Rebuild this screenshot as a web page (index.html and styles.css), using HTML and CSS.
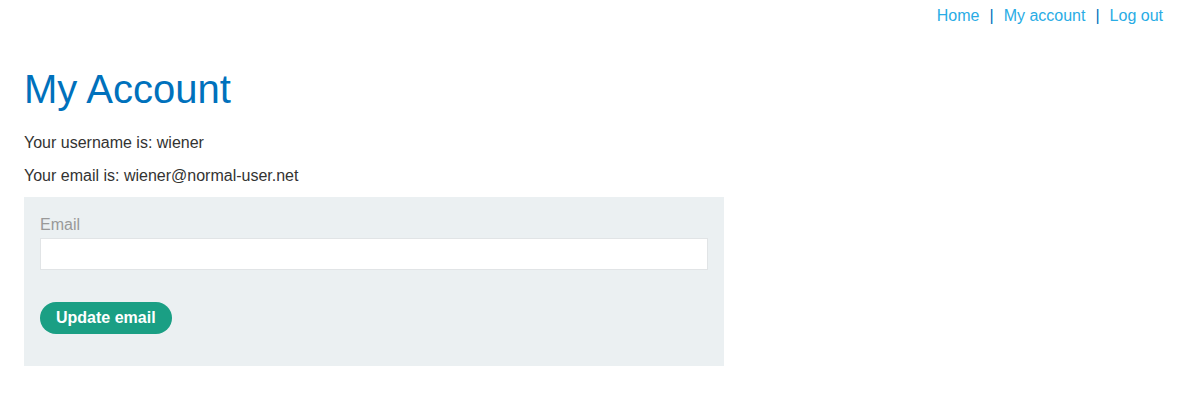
FILE: index.html
```html
<!DOCTYPE html>
<html lang="en">

<head>
  <meta charset="UTF-8">
  <title>My Account</title>
  <link rel="stylesheet" href="styles.css">
</head>

<body>
  <header class="top-links">
    <a href="/">Home</a>
    <span class="sep">|</span>
    <a href="/my-account">My account</a>
    <span class="sep">|</span>
    <a href="/logout">Log out</a>
  </header>

  <main class="container">
    <h1>My Account</h1>
    <p>Your username is: wiener</p>
    <p>Your email is: <span id="user-email">wiener@normal-user.net</span></p>

    <form class="login-form" id="change-email-form" action="/my-account/change-email" method="POST">
      <label for="email">Email</label>
      <input type="email" id="email" name="email">
      <button class="button" type="submit">Update email</button>
    </form>
  </main>
</body>

</html>
```

FILE: styles.css
```css
body {
  margin: 0;
  font-family: "Liberation Sans", Arial, sans-serif;
  font-size: 16px;
  color: #333332;
  background: #fff;
}

.top-links {
  display: flex;
  justify-content: flex-end;
  align-items: center;
  gap: 10px;
  padding: 6px 27px 0 0;
  line-height: 20px;
}

.top-links a {
  color: #29ace5;
  text-decoration: none;
}

.sep {
  color: #0071bc;
}

.container {
  padding: 0 24px;
}

h1 {
  margin: 40px 0 0;
  font-size: 40px;
  font-weight: normal;
  line-height: 46px;
  color: #0071bc;
}

p {
  margin: 14px 0 0;
  line-height: 19px;
}

h1 + p {
  margin-top: 21px;
}

.login-form {
  display: flex;
  flex-direction: column;
  align-items: flex-start;
  width: 700px;
  box-sizing: border-box;
  margin-top: 12px;
  padding: 18px 16px 32px;
  background: #ebf0f2;
}

.login-form label {
  color: #999;
  line-height: 20px;
}

.login-form input {
  width: 100%;
  height: 32px;
  box-sizing: border-box;
  margin: 3px 0 32px;
  border: 1px solid #e1e4e6;
  background: #fff;
  font-size: 16px;
  font-family: inherit;
}

.button {
  height: 32px;
  padding: 0 16px;
  border: none;
  border-radius: 16px;
  background: #1a9f84;
  color: #fff;
  font-family: inherit;
  font-size: 16px;
  font-weight: bold;
}
```
